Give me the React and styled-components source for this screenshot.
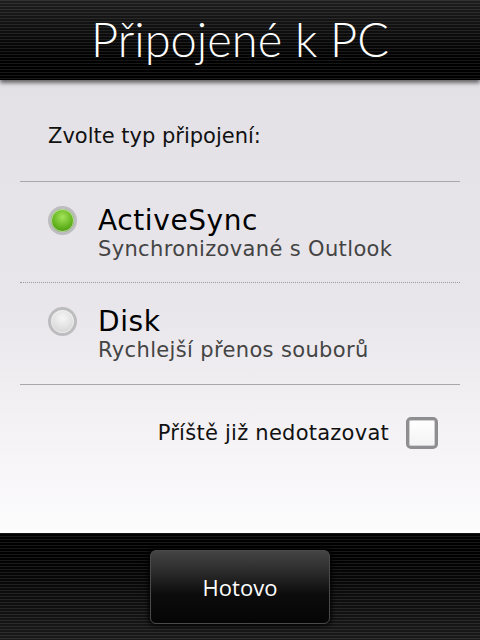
import React, { useState } from "react";
import styled, { createGlobalStyle } from "styled-components";

const GlobalStyle = createGlobalStyle`
  html, body { margin: 0; padding: 0; }
  body { font-family: "DejaVu Sans", "Liberation Sans", sans-serif; }
`;

const options = [
  { id: "activesync", title: "ActiveSync", desc: "Synchronizované s Outlook" },
  { id: "disk", title: "Disk", desc: "Rychlejší přenos souborů" },
];

export default function App() {
  const [selected, setSelected] = useState("activesync");
  const [dontAsk, setDontAsk] = useState(false);

  return (
    <>
      <GlobalStyle />
      <Screen>
        <Header>
          <Title>Připojené k PC</Title>
        </Header>
        <Body>
          <Prompt>Zvolte typ připojení:</Prompt>
          <Options>
            {options.map((o, i) => (
              <Option key={o.id} $dotted={i < options.length - 1} onClick={() => setSelected(o.id)}>
                <Radio $on={selected === o.id} />
                <OptionText>
                  <OptionTitle>{o.title}</OptionTitle>
                  <OptionDesc>{o.desc}</OptionDesc>
                </OptionText>
              </Option>
            ))}
          </Options>
          <CheckRow onClick={() => setDontAsk((p) => !p)}>
            <CheckLabel>Příště již nedotazovat</CheckLabel>
            <CheckBox $on={dontAsk}>{dontAsk ? "✓" : ""}</CheckBox>
          </CheckRow>
        </Body>
        <Footer>
          <DoneButton>Hotovo</DoneButton>
        </Footer>
      </Screen>
    </>
  );
}

const stripes = `repeating-linear-gradient(
  to bottom,
  rgba(255, 255, 255, 0.09) 0px,
  rgba(255, 255, 255, 0.09) 1px,
  rgba(0, 0, 0, 0) 1px,
  rgba(0, 0, 0, 0) 3px
)`;

const Screen = styled.div`
  width: 480px;
  height: 640px;
  display: flex;
  flex-direction: column;
  overflow: hidden;
`;

const Header = styled.div`
  height: 80px;
  flex-shrink: 0;
  background: ${stripes}, linear-gradient(#1e1e1e, #000 75%);
  display: flex;
  align-items: center;
  justify-content: center;
  box-shadow: 0 3px 4px rgba(0, 0, 0, 0.55);
  position: relative;
  z-index: 1;
`;

const Title = styled.h1`
  margin: 0;
  font-family: "Lato", "Open Sans", sans-serif;
  font-weight: 300;
  font-size: 47px;
  color: #fff;
  padding-bottom: 2px;
`;

const Body = styled.div`
  flex: 1;
  background: linear-gradient(#e4e1e6, #e9e6eb 50%, #fdfcfd);
  padding: 0 20px;
  display: flex;
  flex-direction: column;
`;

const Prompt = styled.div`
  font-size: 21px;
  line-height: 24px;
  color: #111;
  padding: 44px 0 0 28px;
  height: 57px;
  border-bottom: 1px solid #a9a7ab;
`;

const Options = styled.div`
  border-bottom: 1px solid #a9a7ab;
`;

const Option = styled.div`
  display: flex;
  align-items: flex-start;
  height: 101px;
  box-sizing: border-box;
  padding: 23px 0 0 28px;
  border-bottom: ${(p) => (p.$dotted ? "1px dotted #9c9a9e" : "none")};
  cursor: pointer;
`;

const Radio = styled.span`
  width: 29px;
  height: 29px;
  border-radius: 50%;
  flex-shrink: 0;
  margin-top: 1px;
  box-sizing: border-box;
  border: 3px solid #bdbcbf;
  background: ${(p) =>
    p.$on
      ? "radial-gradient(circle at 50% 35%, #a4e45a 0%, #63b31e 55%, #3d8510 100%)"
      : "radial-gradient(circle at 50% 35%, #f6f6f6 0%, #dedede 60%, #c4c4c4 100%)"};
  box-shadow: inset 0 0 0 1px rgba(255, 255, 255, 0.5);
`;

const OptionText = styled.div`
  margin-left: 21px;
  display: flex;
  flex-direction: column;
`;

const OptionTitle = styled.div`
  font-size: 28px;
  letter-spacing: 0.6px;
  color: #000;
  line-height: 32px;
`;

const OptionDesc = styled.div`
  font-size: 21px;
  letter-spacing: 0.35px;
  color: #444;
  line-height: 24px;
`;

const CheckRow = styled.div`
  display: flex;
  justify-content: flex-end;
  align-items: center;
  gap: 17px;
  padding: 32px 22px 0 0;
  cursor: pointer;
`;

const CheckLabel = styled.span`
  font-size: 21px;
  letter-spacing: 0.25px;
  color: #111;
`;

const CheckBox = styled.span`
  width: 32px;
  height: 32px;
  box-sizing: border-box;
  border: 3px solid #8e8d90;
  border-radius: 5px;
  background: linear-gradient(#fff, #f3f3f3);
  box-shadow: inset 0 0 0 1px #d0cfd2;
  display: flex;
  align-items: center;
  justify-content: center;
  font-size: 20px;
  color: #333;
`;

const Footer = styled.div`
  height: 107px;
  flex-shrink: 0;
  background: ${stripes}, linear-gradient(#000, #000 20%, #1a1a1a);
  display: flex;
  justify-content: center;
  padding-top: 17px;
  box-sizing: border-box;
`;

const DoneButton = styled.button`
  width: 180px;
  height: 74px;
  border: 1px solid #4a4a4a;
  border-radius: 6px;
  background: linear-gradient(#444 0%, #2a2a2a 30%, #0c0c0c 60%, #050505 100%);
  box-shadow: 0 0 4px 2px rgba(0, 0, 0, 0.8);
  color: #fff;
  font-family: "Open Sans", "Lato", sans-serif;
  font-size: 22px;
  font-weight: 400;
  padding: 0;
  cursor: pointer;
`;
